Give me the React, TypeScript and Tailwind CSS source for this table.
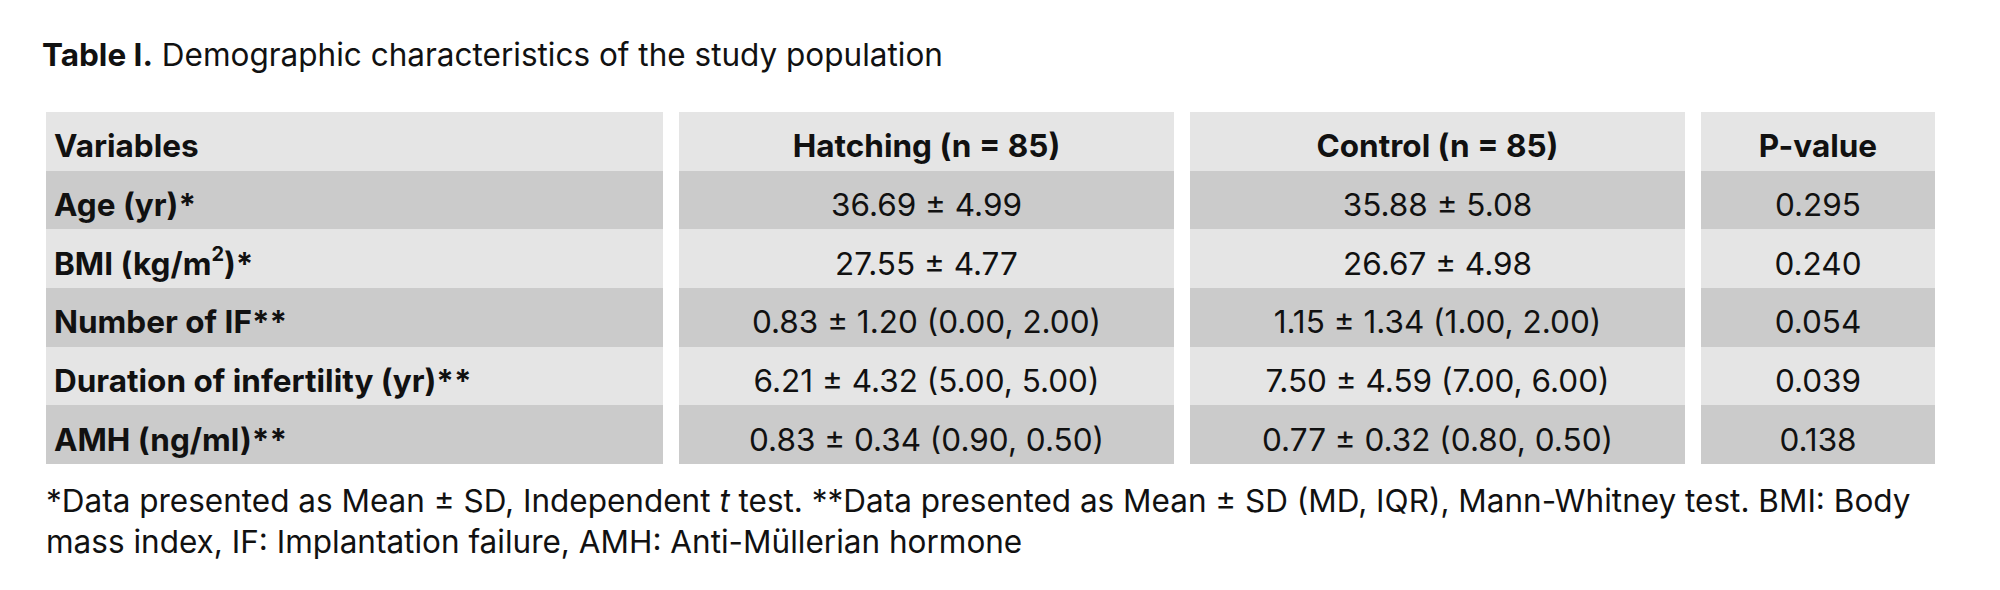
const rows = [
  { label: <>Age (yr)*</>, hatching: "36.69 ± 4.99", control: "35.88 ± 5.08", p: "0.295" },
  {
    label: (
      <>
        BMI (kg/m<sup className="relative -top-[2px] align-super text-[20px] leading-none">2</sup>)*
      </>
    ),
    hatching: "27.55 ± 4.77",
    control: "26.67 ± 4.98",
    p: "0.240",
  },
  { label: <>Number of IF**</>, hatching: "0.83 ± 1.20 (0.00, 2.00)", control: "1.15 ± 1.34 (1.00, 2.00)", p: "0.054" },
  {
    label: <>Duration of infertility (yr)**</>,
    hatching: "6.21 ± 4.32 (5.00, 5.00)",
    control: "7.50 ± 4.59 (7.00, 6.00)",
    p: "0.039",
  },
  { label: <>AMH (ng/ml)**</>, hatching: "0.83 ± 0.34 (0.90, 0.50)", control: "0.77 ± 0.32 (0.80, 0.50)", p: "0.138" },
];

function Cell({ children, dark, left, bold }: { children: React.ReactNode; dark?: boolean; left?: boolean; bold?: boolean }) {
  return (
    <div
      className={`flex h-[58.7px] items-center pt-[10px] leading-[38px] ${dark ? "bg-[#cbcbcb]" : "bg-[#e5e5e5]"} ${
        left ? "justify-start pl-[8px]" : "justify-center"
      } ${bold ? "font-bold" : "font-normal"}`}
    >
      <span>{children}</span>
    </div>
  );
}

export default function App() {
  return (
    <div className="min-h-[590px] w-[2000px] bg-white pt-[36px] font-['Inter',sans-serif] text-[31.5px] text-[#111111]">
      <h1 className="ml-[42px] leading-[38px]">
        <span className="font-bold">Table I.</span> Demographic characteristics of the study population
      </h1>

      <div className="ml-[46px] mt-[38px] grid w-[1889px] grid-cols-[617px_495px_495px_234px] gap-x-[16px]">
        <Cell left bold>Variables</Cell>
        <Cell bold>Hatching (n = 85)</Cell>
        <Cell bold>Control (n = 85)</Cell>
        <Cell bold>P-value</Cell>

        {rows.map((r, i) => {
          const dark = i % 2 === 0;
          return [
            <Cell key={`l${i}`} left bold dark={dark}>
              {r.label}
            </Cell>,
            <Cell key={`h${i}`} dark={dark}>
              {r.hatching}
            </Cell>,
            <Cell key={`c${i}`} dark={dark}>
              {r.control}
            </Cell>,
            <Cell key={`p${i}`} dark={dark}>
              {r.p}
            </Cell>,
          ];
        })}
      </div>

      <p className="ml-[46px] mt-[16px] w-[1889px] leading-[41px]">
        *Data presented as Mean ± SD, Independent <i>t</i> test. **Data presented as Mean ± SD (MD, IQR), Mann-Whitney
        test. BMI: Body mass index, IF: Implantation failure, AMH: Anti-Müllerian hormone
      </p>
    </div>
  );
}
